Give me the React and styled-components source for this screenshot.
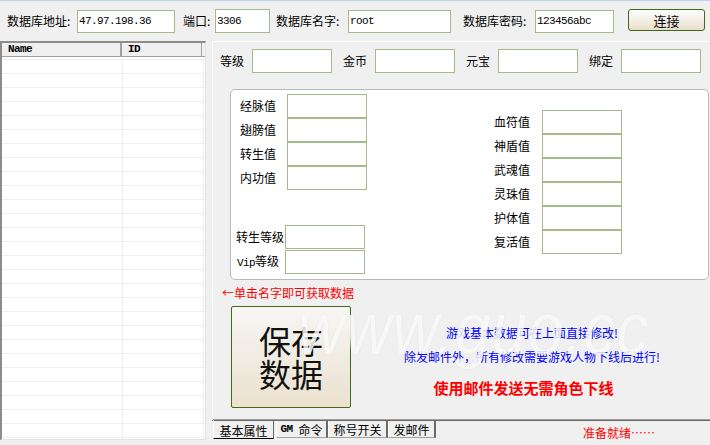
import React from 'react'
import styled, { createGlobalStyle } from 'styled-components'

const cjk = `"Noto Sans CJK SC", "Liberation Sans", sans-serif`
const mono = `"Liberation Mono", "DejaVu Sans Mono", monospace`

const GlobalStyle = createGlobalStyle`
  html, body {
    margin: 0;
    padding: 0;
    background: #f0f0f0;
  }
  body {
    font-family: ${cjk};
    font-size: 12px;
    color: #000;
  }
`

const Window = styled.div`
  position: relative;
  width: 710px;
  height: 445px;
  overflow: hidden;
  box-sizing: border-box;
  border-top: 1px solid #bcd3ec;
  background: #f0f0f0;
  display: flex;
  flex-direction: column;
`

const TopBar = styled.div`
  height: 40px;
  flex: none;
  display: flex;
  align-items: center;
  padding-left: 7px;
`

const TopLabel = styled.span`
  width: ${p => p.$w}px;
  margin-left: ${p => p.$ml || 0}px;
  white-space: nowrap;
  font-size: 12px;
  line-height: 14px;
`

const TextBox = styled.input`
  box-sizing: border-box;
  width: ${p => p.$w || 80}px;
  height: ${p => p.$h || 24}px;
  margin: 0;
  margin-left: ${p => p.$ml || 0}px;
  padding: 0 0 0 1px;
  border: 1px solid #a5ba8b;
  border-radius: 0;
  background: #fff;
  font-family: ${mono};
  font-size: 11px;
  letter-spacing: -0.6px;
  color: #000;
  outline: none;
`

const ConnectButton = styled.button`
  box-sizing: border-box;
  width: 77px;
  height: 22px;
  margin-left: 14px;
  margin-top: -2px;
  padding: 0;
  border: 1px solid #3f6a17;
  border-radius: 3px;
  background: linear-gradient(#fefefd, #f3efe6 50%, #e7decb);
  font-family: ${cjk};
  font-size: 13px;
  color: #000;
`

const Body = styled.div`
  flex: 1;
  display: flex;
  gap: 6px;
  min-height: 0;
`

const ListView = styled.div`
  box-sizing: border-box;
  width: 206px;
  height: 399px;
  flex: none;
  background: #fff;
  border-top: 2px solid #8c8c8c;
  border-left: 2px solid #8c8c8c;
  border-right: 1px solid #e3e3e3;
  border-bottom: 1px solid #e3e3e3;
  overflow: hidden;
`

const ListHeader = styled.div`
  display: flex;
  height: 14px;
  box-sizing: border-box;
  border-bottom: 1px solid #a0a0a0;
  background: #f0f0f0;
`

const HeaderCell = styled.div`
  box-sizing: border-box;
  width: ${p => p.$w}px;
  padding-left: 6px;
  border-right: ${p => p.$edge}px solid #a0a0a0;
  font-family: ${mono};
  font-size: 11px;
  font-weight: 700;
  letter-spacing: -0.6px;
  line-height: 13px;
`

const Rows = styled.div`
  margin-top: 2px;
`

const Row = styled.div`
  display: flex;
  height: 13px;
  border-top: 1px solid #efefef;
`

const Cell = styled.div`
  width: ${p => p.$w}px;
  box-sizing: border-box;
  border-right: 1px solid #efefef;
`

const TabControl = styled.div`
  width: 498px;
  flex: none;
  display: flex;
  flex-direction: column;
`

const TabPage = styled.div`
  box-sizing: border-box;
  height: 379px;
  border-top: 1px solid #fff;
  border-left: 1px solid #fff;
  border-bottom: 1px solid #a0a0a0;
  box-shadow: 0 1px 0 #696969;
`

const FieldRow = styled.div`
  display: flex;
  align-items: center;
  margin-top: 7px;
  padding-left: 7px;
`

const FieldLabel = styled.span`
  width: ${p => p.$w}px;
  flex: none;
  margin-left: ${p => p.$ml || 0}px;
  padding-left: ${p => p.$pl || 0}px;
  box-sizing: border-box;
  white-space: nowrap;
  font-size: 12px;
  line-height: 14px;
`

const Vip = styled.span`
  font-family: ${mono};
  font-size: 11px;
  letter-spacing: -0.6px;
`

const GroupBox = styled.div`
  box-sizing: border-box;
  width: 479px;
  height: 191px;
  margin: 16px 0 0 17px;
  background: #fff;
  border: 1px solid #bababa;
  border-radius: 5px;
  display: flex;
`

const LeftCol = styled.div`
  width: 263px;
  box-sizing: border-box;
  padding: 4px 0 0 5px;
`

const RightCol = styled.div`
  padding-top: 20px;
`

const Stack = styled.div`
  display: flex;
  flex-direction: column;
  gap: ${p => p.$gap || 0}px;
  margin-top: ${p => p.$mt || 0}px;
  padding-left: ${p => p.$pl || 0}px;
`

const StackRow = styled.div`
  display: flex;
  align-items: center;
  height: 24px;
`

const BottomArea = styled.div`
  display: flex;
`

const SaveColumn = styled.div`
  padding-left: 9px;
`

const Hint = styled.div`
  margin-top: 6px;
  color: #ff0000;
  font-size: 12px;
  line-height: 14px;
  white-space: nowrap;
`

const SaveButton = styled.button`
  box-sizing: border-box;
  width: 120px;
  height: 102px;
  margin: 6px 0 0 9px;
  padding: 0;
  border: 1px solid #3f6a17;
  border-radius: 2px;
  background: linear-gradient(#f7f6f3, #f1ece2 50%, #ebe1cd);
  font-family: ${cjk};
  font-size: 32px;
  line-height: 33px;
  color: #111;
`

const Messages = styled.div`
  flex: 1;
  padding-top: 46px;
  text-align: center;
`

const Message = styled.div`
  color: ${p => p.$color};
  font-size: ${p => p.$size || 12}px;
  font-weight: ${p => (p.$bold ? 700 : 400)};
  line-height: ${p => p.$lh || 14}px;
  margin-top: ${p => p.$mt || 0}px;
  padding-right: ${p => p.$pr || 0}px;
  white-space: nowrap;
`

const TabStrip = styled.div`
  display: flex;
  align-items: flex-start;
  padding-left: 1px;
  height: 24px;
`

const Tab = styled.div`
  box-sizing: border-box;
  width: ${p => p.$w}px;
  height: ${p => (p.$active ? 19 : 17)}px;
  margin-top: ${p => (p.$active ? 0 : 1)}px;
  margin-right: ${p => (p.$active ? 2 : 0)}px;
  display: flex;
  align-items: center;
  justify-content: center;
  padding-top: ${p => (p.$active ? 2 : 0)}px;
  border-left: 1px solid #fff;
  border-right: ${p => (p.$active ? '1px solid #696969' : '2px solid #696969')};
  border-bottom: 1px solid ${p => (p.$active ? '#000' : '#a0a0a0')};
  font-size: 12px;
  white-space: nowrap;
`

const TabMono = styled.span`
  font-family: ${mono};
  font-size: 11px;
  font-weight: 700;
  letter-spacing: -0.6px;
  margin-right: 6px;
`

const Status = styled.span`
  margin-left: 147px;
  margin-top: 6px;
  color: #ff0000;
  font-size: 12px;
  line-height: 14px;
`

const Watermark = styled.div`
  position: absolute;
  left: 298px;
  top: 299px;
  font-family: "Liberation Sans", Arial, sans-serif;
  font-style: italic;
  font-size: 64px;
  line-height: 64px;
  letter-spacing: 1px;
  color: rgba(255, 255, 255, 0.78);
  text-shadow: 0 0 1px rgba(170, 170, 170, 0.3);
  transform: scaleY(1.15);
  transform-origin: left 54px;
  pointer-events: none;
  white-space: nowrap;
`

const topFields = [
  { label: '等级', ml: 0 },
  { label: '金币', ml: 11 },
  { label: '元宝', ml: 11 },
  { label: '绑定', ml: 11 },
]

const innerStats = ['经脉值', '翅膀值', '转生值', '内功值']
const extraStats = ['血符值', '神盾值', '武魂值', '灵珠值', '护体值', '复活值']
const tabs = [
  { key: 'base', w: 61, label: '基本属性' },
  { key: 'gm', w: 52, label: '命令', mono: 'GM' },
  { key: 'title', w: 60, label: '称号开关' },
  { key: 'mail', w: 48, label: '发邮件' },
]

const App = () => {
  return (
    <>
      <GlobalStyle />
      <Window>
        <TopBar>
          <TopLabel $w={70}>数据库地址:</TopLabel>
          <TextBox $w={98} $h={23} readOnly value="47.97.198.36" />
          <TopLabel $w={32} $ml={8}>端口:</TopLabel>
          <TextBox $w={55} readOnly value="3306" />
          <TopLabel $w={72} $ml={6}>数据库名字:</TopLabel>
          <TextBox $w={103} $h={23} readOnly value="root" />
          <TopLabel $w={72} $ml={12}>数据库密码:</TopLabel>
          <TextBox $w={79} $h={23} readOnly value="123456abc" />
          <ConnectButton>连接</ConnectButton>
        </TopBar>

        <Body>
          <ListView>
            <ListHeader>
              <HeaderCell $w={120} $edge={2}>Name</HeaderCell>
              <HeaderCell $w={80} $edge={1}>ID</HeaderCell>
            </ListHeader>
            <Rows>
              {Array.from({ length: 30 }, (_, i) => (
                <Row key={i}>
                  <Cell $w={121} />
                  <Cell $w={81} />
                </Row>
              ))}
            </Rows>
          </ListView>

          <TabControl>
            <TabPage>
              <FieldRow>
                {topFields.map(f => (
                  <React.Fragment key={f.label}>
                    <FieldLabel $w={32} $ml={f.ml}>{f.label}</FieldLabel>
                    <TextBox $w={80} readOnly value="" />
                  </React.Fragment>
                ))}
              </FieldRow>

              <GroupBox>
                <LeftCol>
                  <Stack $pl={4}>
                    {innerStats.map(s => (
                      <StackRow key={s}>
                        <FieldLabel $w={47}>{s}</FieldLabel>
                        <TextBox $w={80} readOnly value="" />
                      </StackRow>
                    ))}
                  </Stack>
                  <Stack $mt={35} $gap={1}>
                    <StackRow>
                      <FieldLabel $w={49}>转生等级</FieldLabel>
                      <TextBox $w={80} readOnly value="" />
                    </StackRow>
                    <StackRow>
                      <FieldLabel $w={49} $pl={1}>
                        <Vip>Vip</Vip>等级
                      </FieldLabel>
                      <TextBox $w={80} readOnly value="" />
                    </StackRow>
                  </Stack>
                </LeftCol>
                <RightCol>
                  <Stack>
                    {extraStats.map(s => (
                      <StackRow key={s}>
                        <FieldLabel $w={48}>{s}</FieldLabel>
                        <TextBox $w={80} readOnly value="" />
                      </StackRow>
                    ))}
                  </Stack>
                </RightCol>
              </GroupBox>

              <BottomArea>
                <SaveColumn>
                  <Hint>←单击名字即可获取数据</Hint>
                  <SaveButton>
                    保存
                    <br />
                    数据
                  </SaveButton>
                </SaveColumn>
                <Messages>
                  <Message $color="#0000ff">游戏基本数据可在上面直接修改!</Message>
                  <Message $color="#0000ff" $mt={10}>
                    除发邮件外，所有修改需要游戏人物下线后进行!
                  </Message>
                  <Message $color="#ff0000" $size={15} $lh={18} $bold $mt={15} $pr={17}>
                    使用邮件发送无需角色下线
                  </Message>
                </Messages>
              </BottomArea>
            </TabPage>

            <TabStrip>
              {tabs.map((t, i) => (
                <Tab key={t.key} $w={t.w} $active={i === 0}>
                  {t.mono && <TabMono>{t.mono}</TabMono>}
                  {t.label}
                </Tab>
              ))}
              <Status>准备就绪……</Status>
            </TabStrip>
          </TabControl>
        </Body>

        <Watermark>www.guo.cc</Watermark>
      </Window>
    </>
  )
}

export default App
